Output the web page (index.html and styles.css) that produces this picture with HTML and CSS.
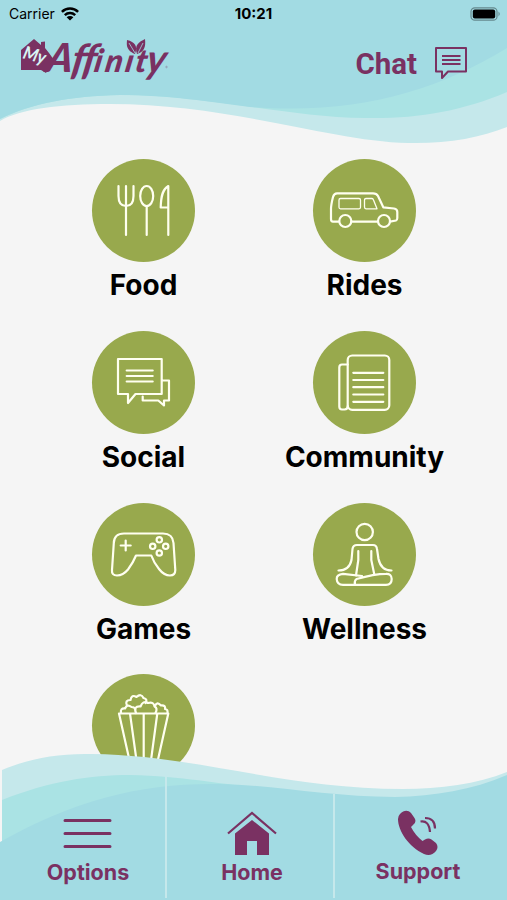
FILE: index.html
```html
<!DOCTYPE html>
<html lang="en">

<head>
    <meta charset="UTF-8">
    <meta name="viewport" content="width=device-width, initial-scale=1.0">
    <title>My Affinity</title>
    <link rel="stylesheet" href="styles.css">
</head>

<body>
    <div class="app">
        <header class="header">
            <svg class="waves" viewBox="0 0 507 150">
                <path fill="#c5e8eb" d="M0 0H507V127C480 138 445 144 408 143C330 141 230 104 110 104C60 104 20 109 0 121Z"/>
                <path fill="#aae3e4" d="M0 0H507V92C460 112 415 119 365 118C285 117 210 95 120 95C70 96 30 104 0 119Z"/>
                <path fill="#a2dbe3" d="M0 0H507V48C435 92 355 115 250 107C210 102 170 95 120 95C70 96 30 104 0 119Z"/>
            </svg>
            <div class="status-bar">
                <div class="carrier">
                    <span>Carrier</span>
                    <svg width="18" height="14" viewBox="0 0 18 14" fill="none" stroke="#000" stroke-width="2.5">
                        <path d="M.9 4.9C5.4.5 12.6.5 17.1 4.9M3.8 8.1C6.8 5.3 11.2 5.3 14.2 8.1"/>
                        <path fill="#000" stroke="none" d="M5.6 10.2C7.5 8.5 10.5 8.5 12.4 10.2L9 13.6Z"/>
                    </svg>
                </div>
                <div class="time">10:21</div>
                <svg class="battery" width="31" height="14" viewBox="0 0 31 14">
                    <rect x="1" y=".8" width="26" height="12.4" rx="3.8" fill="none" stroke="#65898e" stroke-width="1.2"/>
                    <rect x="2.8" y="2.6" width="22.4" height="8.8" rx="2"/>
                    <path fill="#65898e" d="M28.5 4.6Q31 7 28.5 9.4Z"/>
                </svg>
            </div>
            <div class="title-bar">
                <svg class="logo" width="150" height="52" viewBox="0 0 150 52" fill="#7a3162">
                    <path d="M1 14L14 3L21 9V6L25 5.500V12L29 17L34 24L26 37L21 34H1Z"/>
                    <text class="logo-my" transform="translate(2 22) rotate(16)" textLength="23" lengthAdjust="spacingAndGlyphs">My</text>
                    <text class="logo-name" transform="translate(0 36) skewX(-10)"><tspan class="logo-cap" x="25">A</tspan><tspan class="logo-tall" x="50 61" y="2">ff</tspan><tspan x="73 84 104" y="0">inı</tspan><tspan x="114">t</tspan><tspan class="logo-tail" x="125" y="1">y</tspan></text>
                    <path d="M115 18C105 14 107 7 107 4C115 6 118 10 115 18ZM117 18C114 9 119 6 125 3C126 11 124 16 117 18Z"/>
                    <path fill="none" stroke="#a2dbe3" stroke-width=".8" d="M109 7L115 17M123 7L118 17"/>
                    <circle cx="146.500" cy="31" r=".8" fill="none" stroke="#7a3162" stroke-width=".3"/>
                </svg>
                <a class="chat" href="#">
                    <span>Chat</span>
                    <svg width="34" height="34" viewBox="0 0 34 34" fill="none" stroke="#7a3162" stroke-width="2" stroke-linejoin="round">
                        <path d="M2 2H32V25.500H14L8 32V25.500H2Z"/>
                        <path d="M8 10H26.500M8 14H26.500M8 18H26.500"/>
                    </svg>
                </a>
            </div>
        </header>

        <main class="menu">
            <a class="item" href="#">
                <svg class="icon" viewBox="0 0 103 103">
                    <path d="M26.500 27V37Q26.500 47 34 47Q41.500 47 41.500 37V27M34 27V76M54.700 47V76M76.300 76V27C71 30 69 36 68.700 48.500H76.300"/>
                    <ellipse cx="54.700" cy="37" rx="6.500" ry="10"/>
                </svg>
                <span>Food</span>
            </a>
            <a class="item" href="#">
                <svg class="icon" viewBox="0 0 103 103">
                    <path d="M26 62.700H20Q18 62.700 18 60V50Q18 46 20 38Q21 34.300 24 34.300H60Q63.500 34.300 65 37L70.300 48.300L81 49.500Q84.300 50 84.300 53V59Q84.300 61 83 61.500L77 62.700M38.600 62.700H64.700"/>
                    <circle cx="32.300" cy="62" r="6"/>
                    <circle cx="71" cy="62" r="6"/>
                    <g stroke-width="1.300">
                        <rect x="26" y="39.500" width="21.500" height="10.300" rx="1.500"/>
                        <path d="M53 39.500H59Q60 39.500 60.500 41L64 49.800H53Q51.500 49.800 51.500 48V41Q51.500 39.500 53 39.500Z"/>
                    </g>
                </svg>
                <span>Rides</span>
            </a>
            <a class="item" href="#">
                <svg class="icon" viewBox="0 0 103 103">
                    <path d="M26 28H69.700V63H43.500L36 72V63H26ZM34.700 39.500H60.700M34.700 45H60.700M34.700 50.500H60.700M71 49.500H77V69.500H72V74.500L66.300 69.500H50.700V65.500"/>
                </svg>
                <span>Social</span>
            </a>
            <a class="item" href="#">
                <svg class="icon" viewBox="0 0 103 103">
                    <rect x="34.700" y="24.500" width="41.600" height="54.300" rx="4.500"/>
                    <path d="M34.700 33.500H29Q26.300 33.500 26.300 36.500V75.500Q26.300 78.500 29 78.500H31.500Q34.700 78.500 34.700 75M40.300 41.800H70.300M40.300 49H70.300M40.300 56.200H70.300M40.300 63.500H70.300M40.300 70.800H70.300"/>
                </svg>
                <span>Community</span>
            </a>
            <a class="item" href="#">
                <svg class="icon" viewBox="0 0 103 103">
                    <path d="M32 30.500H71C78 30.500 81 34 81.500 40L83.300 67Q83.300 72.500 78 72.500Q72 72.500 67 66Q62 60 59.300 52.500H44Q41 60 36 66.500Q31 72.500 25 72.500Q19.500 72.500 20 67L21.800 40C22 34 25 30.500 32 30.500ZM33.700 37.500V47.500M28.700 42.500H38.700"/>
                    <circle cx="67.300" cy="36.800" r="2.700"/>
                    <circle cx="60.700" cy="43.300" r="2.700"/>
                    <circle cx="73.700" cy="43.300" r="2.700"/>
                    <circle cx="67.300" cy="50" r="2.700"/>
                </svg>
                <span>Games</span>
            </a>
            <a class="item" href="#">
                <svg class="icon" viewBox="0 0 103 103">
                    <circle cx="51.700" cy="29" r="8.200"/>
                    <path d="M25.500 67.500C32 67.500 37 64 38.500 57L39.500 46Q40 42 44 42H60Q63.500 42 64 46L65.500 56C67 63 71 67.500 78.500 67.500"/>
                    <path d="M45.300 48V57L43 72.500M58.300 48V57L61.300 71.500"/>
                    <path d="M49 73L30 70.800Q23.500 71.500 23.700 76Q24 81.800 30 81.800H73Q78.700 81.800 78.700 76Q78.500 70.500 73 70.800C63 70.800 52 73.500 43.500 76Q41 78 42 81.500"/>
                </svg>
                <span>Wellness</span>
            </a>
            <a class="item" href="#">
                <svg class="icon" viewBox="0 0 103 103">
                    <path d="M27 39.500H76.300L65 90H38.300ZM38 39.500L45 90M51.700 39.500V90M65.300 39.500L58.500 90"/>
                    <path d="M29 39Q28 34 33 34.500Q35 29.500 39.500 33Q43 33 43.500 36M35 31.500Q32.500 26 38.500 26Q39.500 20 44.500 23Q49 19 51.500 24Q56 25 53.500 29M44 39Q41 32 48.500 32.500Q51 26 56 29Q62 27.500 62.500 32.500Q66 34 63.500 39M63 32Q65 27 69 31.500Q74 31 73 35Q76 35 75.500 39"/>
                </svg>
            </a>
        </main>

        <nav class="tabs">
            <svg class="waves" viewBox="0 0 507 150">
                <path fill="#c5e8eb" d="M2 20C28 9 58 3 92 4C195 5 285 39 403 39C440 39 477 34 507 22V150H2Z"/>
                <path fill="#aae3e4" d="M2 50C50 31 90 25 130 25C185 26 220 35 260 37V150H2Z"/>
                <path fill="#a2dbe3" d="M0 92C75 50 140 33 220 34C275 35 330 47 395 47C435 46 472 40 507 25V150H0Z"/>
            </svg>
            <a class="tab" href="#">
                <svg width="50" height="46" viewBox="0 0 50 46" fill="none" stroke="#7a3162" stroke-width="3" stroke-linecap="round">
                    <path d="M2 10.500H47M2 23.500H47M2 36.500H47"/>
                </svg>
                <span>Options</span>
            </a>
            <a class="tab tab-home" href="#">
                <svg width="50" height="46" viewBox="0 0 50 46" fill="#7a3162">
                    <path d="M8 23.500L25 10L42 23.500V45H30V31H20V45H8Z"/>
                    <path fill="none" stroke="#7a3162" stroke-width="2.200" d="M1 23.500L25 3L49 23.500"/>
                </svg>
                <span>Home</span>
            </a>
            <a class="tab tab-support" href="#">
                <svg width="40" height="46" viewBox="0 0 40 46" fill="#7a3162">
                    <path d="M2 4C6 0 10 0 13 3L16.500 8Q19 12 15 15L13 17Q17 25 24.500 31L27 29.500Q30.500 27.500 33.500 29.500L38 33Q41 37 38 41Q33 47 26 44C11 37 0 21 0 9Q0 6 2 4Z"/>
                    <path fill="none" stroke="#7a3162" stroke-width="2.200" d="M22.500 11.500Q31 10 32 22M27 8Q37 8 37 18.500"/>
                </svg>
                <span>Support</span>
            </a>
        </nav>
    </div>
</body>

</html>
```
FILE: styles.css
```css
body {
    margin: 0;
    font-family: Inter, "Liberation Sans", sans-serif;
}

a {
    color: inherit;
    text-decoration: none;
}

.app {
    display: flex;
    flex-direction: column;
    width: 507px;
    height: 900px;
    overflow: hidden;
    background-color: #f5f5f5;
}

.header {
    position: relative;
    flex: none;
    height: 150px;
}

/* wave artwork behind the header and tab bar */
.waves {
    position: absolute;
    top: 0;
    left: 0;
    width: 507px;
    height: 150px;
}

.status-bar {
    position: relative;
    display: grid;
    grid-template-columns: 1fr auto 1fr;
    align-items: center;
    height: 27px;
    padding: 0 6px 0 9px;
    font-size: 14px;
}

.carrier {
    display: flex;
    align-items: center;
    gap: 6px;
}

.time {
    padding-right: 3px;
    font-size: 15px;
    font-weight: 700;
}

.battery {
    justify-self: end;
}

.title-bar {
    position: relative;
    display: flex;
    justify-content: space-between;
    padding: 9px 39px 0 20px;
}

.logo {
    overflow: visible;
}

.logo-my {
    fill: #d9f3f5;
    font: italic 700 18px Lato, sans-serif;
}

.logo-name {
    font: italic 900 32px Lato, sans-serif;
    font-variant-ligatures: none;
}

.logo-cap {
    font-size: 40px;
}

.logo-tall {
    font-size: 42px;
    font-weight: 700;
}

.logo-tail {
    font-size: 40px;
    font-weight: 700;
}

.chat {
    display: flex;
    align-items: center;
    gap: 17px;
    height: 54px;
    color: #7a3162;
    font-family: Roboto, sans-serif;
    font-size: 29.500px;
    font-weight: 700;
}

.chat span {
    padding-top: 2px;
}

.menu {
    flex: 1;
    display: grid;
    grid-template-columns: 221px 221px;
    grid-auto-rows: 171.800px;
    padding: 9px 32px 0 33px;
    min-height: 0;
}

.item {
    display: flex;
    flex-direction: column;
    align-items: center;
    gap: 6px;
    color: #000;
    font-size: 28px;
    font-weight: 700;
    line-height: 34px;
}

.icon {
    width: 103px;
    height: 103px;
    border-radius: 50%;
    background-color: #98a94d;
    fill: none;
    stroke: #fffff0;
    stroke-width: 2.200;
    stroke-linecap: round;
    stroke-linejoin: round;
}

.tabs {
    position: relative;
    flex: none;
    display: grid;
    grid-template-columns: 165px 168px 174px;
    height: 150px;
}

.tab {
    position: relative;
    display: flex;
    flex-direction: column;
    align-items: center;
    gap: 2px;
    margin: 26px 0 2px;
    padding-top: 34px;
    padding-left: 11px;
    color: #7a3162;
    font-size: 21.500px;
    font-weight: 700;
    line-height: 28px;
}

.tab-home {
    padding-left: 4px;
    border-left: 2px solid #c5e8eb;
}

.tab-support {
    gap: 1px;
    margin-top: 44px;
    padding-top: 16px;
    padding-left: 0;
    padding-right: 6px;
    border-left: 2px solid #c5e8eb;
}
```
